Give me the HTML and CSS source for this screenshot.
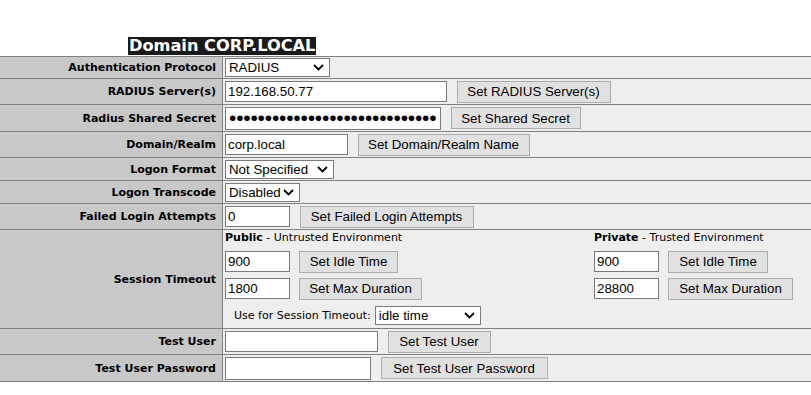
FILE: index.html
```html
<!DOCTYPE html>
<html lang="en">
<head>
    <meta charset="UTF-8">
    <title>Domain CORP.LOCAL</title>
    <link rel="stylesheet" href="styles.css">
</head>
<body>
    <h2 class="domain-title"><span>Domain CORP.LOCAL</span></h2>

    <table class="settings">
        <tr class="row-select first">
            <th>Authentication Protocol</th>
            <td>
                <select class="sel sel-proto"><option>RADIUS</option></select>
            </td>
        </tr>
        <tr class="row-input">
            <th>RADIUS Server(s)</th>
            <td>
                <input type="text" class="txt txt-server" value="192.168.50.77">
                <button class="btn btn-server">Set RADIUS Server(s)</button>
            </td>
        </tr>
        <tr class="row-input tall">
            <th>Radius Shared Secret</th>
            <td>
                <input type="password" class="txt txt-secret" value="secretsecretsecretsecretsecretsecretsecret">
                <button class="btn btn-secret">Set Shared Secret</button>
            </td>
        </tr>
        <tr class="row-input">
            <th>Domain/Realm</th>
            <td>
                <input type="text" class="txt txt-realm" value="corp.local">
                <button class="btn btn-realm">Set Domain/Realm Name</button>
            </td>
        </tr>
        <tr class="row-select">
            <th>Logon Format</th>
            <td>
                <select class="sel sel-format"><option>Not Specified</option></select>
            </td>
        </tr>
        <tr class="row-select">
            <th>Logon Transcode</th>
            <td>
                <select class="sel sel-transcode"><option>Disabled</option></select>
            </td>
        </tr>
        <tr class="row-input">
            <th>Failed Login Attempts</th>
            <td>
                <input type="text" class="txt txt-small" value="0">
                <button class="btn btn-failed">Set Failed Login Attempts</button>
            </td>
        </tr>
        <tr class="row-session">
            <th>Session Timeout</th>
            <td>
                <div class="session">
                    <div class="env env-public">
                        <div class="env-title"><b>Public</b> - Untrusted Environment</div>
                        <div class="env-line">
                            <input type="text" class="txt txt-time" value="900">
                            <button class="btn btn-idle">Set Idle Time</button>
                        </div>
                        <div class="env-line">
                            <input type="text" class="txt txt-time" value="1800">
                            <button class="btn btn-max">Set Max Duration</button>
                        </div>
                        <div class="env-use">
                            <span>Use for Session Timeout:</span>
                            <select class="sel sel-use"><option>idle time</option></select>
                        </div>
                    </div>
                    <div class="env env-private">
                        <div class="env-title"><b>Private</b> - Trusted Environment</div>
                        <div class="env-line">
                            <input type="text" class="txt txt-time" value="900">
                            <button class="btn btn-idle">Set Idle Time</button>
                        </div>
                        <div class="env-line">
                            <input type="text" class="txt txt-time" value="28800">
                            <button class="btn btn-max">Set Max Duration</button>
                        </div>
                    </div>
                </div>
            </td>
        </tr>
        <tr class="row-input">
            <th>Test User</th>
            <td>
                <input type="text" class="txt txt-user">
                <button class="btn btn-user">Set Test User</button>
            </td>
        </tr>
        <tr class="row-input tall">
            <th>Test User Password</th>
            <td>
                <input type="password" class="txt txt-userpass">
                <button class="btn btn-userpass">Set Test User Password</button>
            </td>
        </tr>
    </table>
</body>
</html>
```

FILE: styles.css
```css
body {
    margin: 0;
    font-family: "DejaVu Sans", Verdana, sans-serif;
    font-size: 11px;
    color: #000;
    background: #fff;
}
.domain-title {
    margin: 37px 0 0 128px;
    height: 19px;
    font-size: 16.2px;
    line-height: 18px;
}
.domain-title span {
    display: inline-block;
    background: #1a1a1a;
    color: #fff;
    padding: 0 1px;
}
.settings {
    border-collapse: collapse;
    width: 830px;
    border-top: 1px solid #808080;
}
.settings th,
.settings td {
    border-bottom: 1px solid #808080;
    padding: 0 2px;
    vertical-align: middle;
}
.settings th {
    width: 214px;
    padding-right: 6px;
    background: #c8c8c8;
    text-align: right;
    font-weight: bold;
    white-space: nowrap;
    border-right: 1px solid #808080;
}
.settings td {
    background: #eeeeee;
    padding-left: 2px;
    white-space: nowrap;
}
.row-select th, .row-select td { height: 22px; }
.row-select.first th, .row-select.first td { height: 21px; }
.row-input th, .row-input td { height: 25px; }
.row-input.tall th, .row-input.tall td { height: 26px; }
.row-session th, .row-session td { height: 96px; }

/* form controls */
.txt, .sel, .btn {
    font-family: "Liberation Sans", Arial, sans-serif;
    font-size: 13.3px;
    color: #000;
    margin: 0;
    box-sizing: border-box;
    vertical-align: middle;
}
.txt {
    height: 21px;
    padding: 0 2px;
    border: 1px solid #7a7a7a;
    background: #fff;
    outline: none;
}
.txt[type="password"] {
    height: 23px;
    font-size: 21px;
    padding: 0 3px;
    letter-spacing: -0.2px;
}
.sel {
    -webkit-appearance: none;
    appearance: none;
    height: 19px;
    padding: 0 18px 0 3px;
    border: 1px solid #7a7a7a;
    border-radius: 0;
    background: #fff url("data:image/svg+xml;utf8,<svg xmlns='http://www.w3.org/2000/svg' width='11' height='7'><path d='M1 1 L5.5 5.5 L10 1' fill='none' stroke='black' stroke-width='1.8'/></svg>") no-repeat right 5px center;
}
.btn {
    height: 22px;
    padding: 0;
    border: 1px solid #adadad;
    background: #e1e1e1;
    border-radius: 0;
    margin-left: 6px;
    white-space: nowrap;
    text-align: center;
}

.sel-proto { width: 105px; }
.sel-format { width: 109px; }
.sel-transcode { width: 75px; }
.sel-use { width: 106px; }

.txt-server { width: 222px; }
.btn-server { width: 154px; }
.txt-secret { width: 216px; }
.btn-secret { width: 130px; }
.txt-realm { width: 123px; }
.btn-realm { width: 172px; }
.txt-small { width: 65px; }
.btn-failed { width: 174px; }
.txt-user { width: 153px; }
.btn-user { width: 103px; }
.txt-userpass { width: 146px; }
.btn-userpass { width: 167px; }

/* session timeout block */
.session {
    display: flex;
    padding: 1px 0 2px 0;
}
.env-public { width: 369px; }
.env-title {
    height: 14px;
    line-height: 14px;
    margin-bottom: 5px;
}
.env-line {
    height: 23px;
    margin-bottom: 4px;
    display: flex;
    align-items: center;
    gap: 9px;
}
.env-line .btn { margin-left: 0; }
.txt-time { width: 65px; }
.env-public .btn-idle { width: 99px; }
.env-public .btn-max { width: 123px; }
.env-private .btn-idle { width: 100px; }
.env-private .btn-max { width: 125px; }
.env-use {
    height: 22px;
    display: flex;
    align-items: center;
    padding-left: 9px;
    gap: 4px;
}
```
